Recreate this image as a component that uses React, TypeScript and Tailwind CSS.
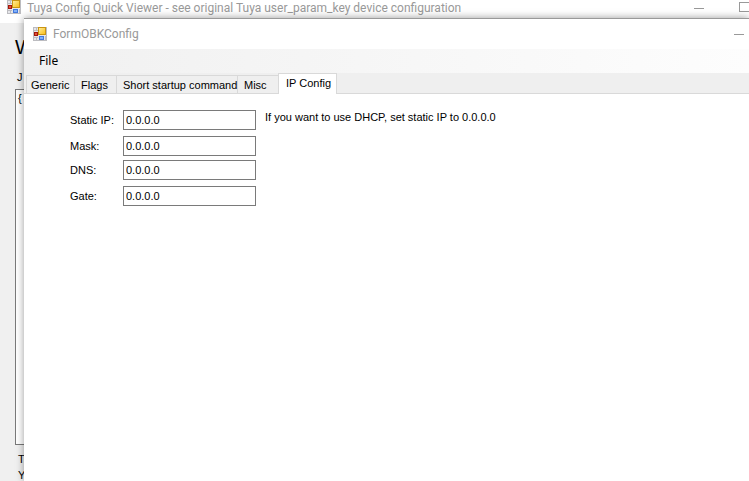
import { useState } from "react";

function FormIcon() {
  return (
    <svg width="14" height="14" viewBox="0 0 14 14" className="shrink-0" aria-hidden="true" shapeRendering="crispEdges">
      <defs>
        <linearGradient id="gold" x1="0" y1="0" x2="1" y2="1">
          <stop offset="0" stopColor="#ffeea0" />
          <stop offset="1" stopColor="#f9bd12" />
        </linearGradient>
      </defs>
      <rect x="0.5" y="0.5" width="13" height="13" fill="#e6e6ea" stroke="#bcbcc0" />
      <path d="M0 3.5h5M3.5 0v4M0 10.5h5M3.5 10v4M12.5 9v4" stroke="#bcbcc0" fill="none" />
      <rect x="5.5" y="0.5" width="7" height="7" fill="url(#gold)" stroke="#c99412" />
      <rect x="1.5" y="5.5" width="3" height="3" fill="#e0533c" stroke="#a3170c" />
      <rect x="6.5" y="9.5" width="4" height="3" fill="#7fb0fa" stroke="#4278dc" />
    </svg>
  );
}

function MinimizeButton() {
  return (
    <button aria-label="Minimize" className="flex h-4 w-3 items-center justify-center">
      <span className="h-px w-2.5 bg-[#999999]" />
    </button>
  );
}

const tabs = [
  { name: "Generic", size: "ml-0.5 w-[49px] border-l border-r pl-1" },
  { name: "Flags", size: "w-[42px] border-r pl-1.5" },
  { name: "Short startup command", size: "w-[121px] border-r pl-1.5" },
  { name: "Misc", size: "w-10 pl-1.5" },
  { name: "IP Config", size: "w-[59px] border-l border-r pl-[7px]" },
];

const fields = [
  { id: "ip", label: "Static IP:", gap: "" },
  { id: "mask", label: "Mask:", gap: "mt-1.5" },
  { id: "dns", label: "DNS:", gap: "mt-1" },
  { id: "gate", label: "Gate:", gap: "mt-1.5" },
];

function ViewerWindow() {
  return (
    <section className="flex h-full flex-col bg-[#f0f0f0]">
      <header className="flex h-[23px] shrink-0 items-start justify-between bg-white pl-[7px] font-['Roboto',sans-serif] text-[12px] leading-4 text-[#999999]">
        <div className="flex gap-1.5">
          <FormIcon />
          <h1 className="whitespace-nowrap">Tuya Config Quick Viewer - see original Tuya user_param_key device configuration</h1>
        </div>
        <div className="flex gap-[34px]">
          <MinimizeButton />
          <button aria-label="Maximize" className="mt-0.5 -mr-px h-2.5 w-[11px] border border-[#999999]" />
        </div>
      </header>
      <div className="-mb-0.5 flex grow flex-col pl-[15px]">
        <h2 className="mt-3 text-[20px] leading-6">W</h2>
        <label htmlFor="json" className="mt-2.5 pl-0.5 leading-4">J</label>
        <textarea id="json" defaultValue="{" className="mt-1 mb-1.5 w-full grow resize-none border border-[#7a7a7a] bg-white px-0.5 leading-4 outline-none" />
        <p className="pl-[3px] leading-4">T</p>
        <p className="pl-[3px] leading-4">Y</p>
      </div>
    </section>
  );
}

function ConfigWindow() {
  const [active, setActive] = useState("IP Config");
  return (
    <section className="absolute top-[18px] right-0 bottom-0 left-6 flex flex-col border-t border-[#999999] bg-white shadow-[0_0_8px_rgba(0,0,0,0.4)]">
      <header className="flex h-[30px] shrink-0 items-center justify-between pr-1 pl-[9px] font-['Roboto',sans-serif] text-[12px] text-[#999999]">
        <div className="flex items-center gap-1.5">
          <FormIcon />
          <h2>FormOBKConfig</h2>
        </div>
        <MinimizeButton />
      </header>
      <nav className="flex h-6 shrink-0 items-center bg-linear-to-r from-[#f0f0f0] to-[#fdfdfd] pl-[15px] font-['Noto_Sans',sans-serif] text-[12px]">
        <button>File</button>
      </nav>
      <div role="tablist" className="flex h-[21px] shrink-0 items-end border-b border-[#d9d9d9] bg-[#efefef]">
        {tabs.map((tab) => (
          <button
            key={tab.name}
            role="tab"
            aria-selected={tab.name === active}
            onClick={() => setActive(tab.name)}
            className={`${tab.size} flex shrink-0 items-center border-t border-[#d9d9d9] whitespace-nowrap ${
              tab.name === active ? "-mb-px h-[21px] bg-white pb-0.5" : "h-[18px] pt-px"
            }`}
          >
            {tab.name}
          </button>
        ))}
      </div>
      <main className="flex items-start gap-[9px] pt-4 pl-[46px]">
        <form>
          {fields.map((field) => (
            <div key={field.id} className={`${field.gap} flex h-5 items-center`}>
              <label htmlFor={field.id} className="w-[53px]">{field.label}</label>
              <input id={field.id} defaultValue="0.0.0.0" className="h-5 w-[133px] border border-[#7a7a7a] bg-white px-0.5 outline-none" />
            </div>
          ))}
        </form>
        <p className="leading-[14px]">If you want to use DHCP, set static IP to 0.0.0.0</p>
      </main>
    </section>
  );
}

export default function App() {
  return (
    <div className="relative h-screen overflow-hidden font-['Liberation_Sans',Arial,sans-serif] text-[11px] text-black">
      <ViewerWindow />
      <ConfigWindow />
    </div>
  );
}
